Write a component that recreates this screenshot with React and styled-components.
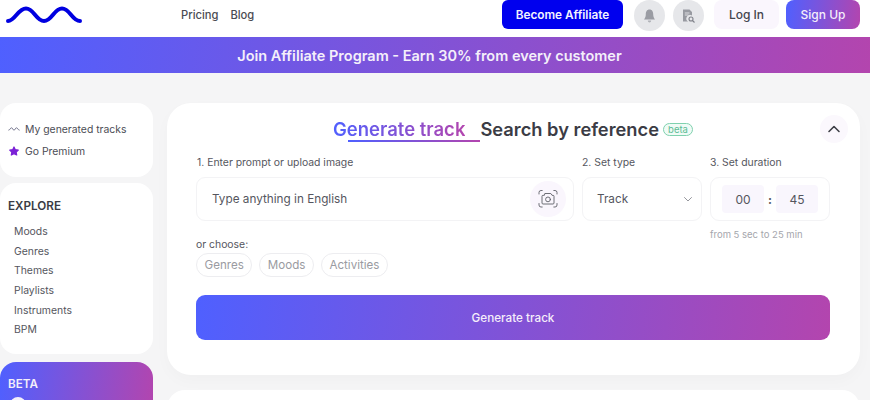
import React from 'react';
import styled, { createGlobalStyle } from 'styled-components';

const GRADIENT = 'linear-gradient(96deg, #4f60ff 0%, #b345ae 100%)';

const GlobalStyle = createGlobalStyle`
  html, body { margin: 0; padding: 0; background: #f5f5f6; }
  body { font-family: Inter, "Noto Sans", sans-serif; color: #3a3b44; }
  * { box-sizing: border-box; }
`;

const Page = styled.div`
  width: 870px;
  height: 400px;
  overflow: hidden;
`;

/* top bar */
const Header = styled.header`
  height: 37px;
  background: #fff;
  display: flex;
  align-items: flex-start;
  padding: 0 10px 0 6px;
`;

const Logo = styled.svg`
  width: 76px;
  height: 18px;
  margin-top: 6px;
  flex: none;
`;

const Nav = styled.nav`
  display: flex;
  gap: 12px;
  margin: 8px 0 0 99px;
  font-size: 11.2px;
  line-height: 14px;
  font-weight: 500;
  color: #4a4b52;
`;

const HeaderActions = styled.div`
  margin-left: auto;
  display: flex;
  align-items: flex-start;
`;

const AffiliateButton = styled.div`
  width: 121px;
  height: 29px;
  background: #0000ee;
  border-radius: 6px;
  color: #f3f3ff;
  font-size: 11.8px;
  font-weight: 600;
  display: flex;
  align-items: center;
  justify-content: center;
  margin-right: 11px;
`;

const RoundIcon = styled.div`
  width: 31px;
  height: 31px;
  border-radius: 50%;
  background: #e6e7ea;
  display: flex;
  align-items: center;
  justify-content: center;
  margin-right: ${(props) => props.$gap}px;
`;

const AuthButton = styled.div`
  width: ${(props) => props.$w}px;
  height: 29px;
  border-radius: 8px;
  background: ${(props) => (props.$primary ? GRADIENT : '#faf6fd')};
  color: ${(props) => (props.$primary ? '#f5eefa' : '#44454d')};
  font-size: 12px;
  font-weight: 500;
  display: flex;
  align-items: center;
  justify-content: center;
  margin-left: ${(props) => props.$gap || 0}px;
`;

/* promo strip */
const Banner = styled.div`
  height: 36px;
  background: ${GRADIENT};
  color: #f4effa;
  font-size: 14.5px;
  font-weight: 600;
  display: flex;
  align-items: center;
  justify-content: center;
  padding-right: 11px;
`;

const Columns = styled.div`
  display: grid;
  grid-template-columns: 153px 693px;
  column-gap: 14px;
  padding-top: 30px;
`;

const Sidebar = styled.aside`
  display: flex;
  flex-direction: column;
  gap: 6px;
`;

const SideCard = styled.div`
  background: #fff;
  border-radius: 16px;
  padding: ${(props) => props.$padding};
  height: ${(props) => props.$height}px;
`;

const QuickLink = styled.div`
  display: flex;
  align-items: center;
  gap: 5px;
  height: 22px;
  font-size: 10.4px;
  color: #4c4d55;
`;

const QuickIcon = styled.svg`
  width: 12px;
  height: 12px;
  flex: none;
`;

const SideTitle = styled.div`
  font-size: 11.7px;
  font-weight: 600;
  color: #3a3b44;
  margin-bottom: 9px;
`;

const SideItem = styled.div`
  height: 19.7px;
  margin-left: 6px;
  font-size: 10.4px;
  line-height: 19.7px;
  color: #55565e;
`;

const BetaCard = styled(SideCard)`
  background: ${GRADIENT};
  margin-top: 2px;
  color: #f4effa;
  font-size: 11.7px;
  font-weight: 600;
`;

const BetaDot = styled.div`
  width: 16px;
  height: 16px;
  margin: 6px 0 0 2px;
  border-radius: 50%;
  background: #f4effa;
`;

const Main = styled.main`
  display: flex;
  flex-direction: column;
  gap: 15px;
`;

const GenerateCard = styled.section`
  position: relative;
  height: 272px;
  background: #fff;
  border-radius: 24px;
  padding: 13px 30px 0 29px;
  box-shadow: 0 6px 16px rgba(40, 40, 60, 0.025);
`;

const NextCard = styled.section`
  height: 60px;
  background: #fff;
  border-radius: 18px;
`;

const TitleRow = styled.div`
  display: flex;
  align-items: center;
  justify-content: center;
  height: 25px;
`;

const ActiveTab = styled.div`
  position: relative;
  margin-right: 15px;

  &::after {
    content: '';
    position: absolute;
    left: 15px;
    right: -15px;
    bottom: -2px;
    height: 1.5px;
    background: ${GRADIENT};
  }
`;

const GradientText = styled.span`
  font-size: 18.5px;
  font-weight: 600;
  background: ${GRADIENT};
  -webkit-background-clip: text;
  background-clip: text;
  color: transparent;
`;

const Tab = styled.div`
  font-size: 18.3px;
  font-weight: 600;
  color: #3b3c45;
`;

const BetaBadge = styled.span`
  margin: 2px 0 0 4px;
  width: 30px;
  height: 13px;
  border: 1px solid #7fd1ae;
  border-radius: 7px;
  background: #f0fbf6;
  color: #5cbc95;
  font-size: 9.5px;
  line-height: 11px;
  text-align: center;
`;

const Collapse = styled.div`
  position: absolute;
  top: 12px;
  right: 12px;
  width: 28px;
  height: 28px;
  border-radius: 50%;
  background: #fbf8fd;
  display: flex;
  align-items: center;
  justify-content: center;
`;

const FieldGrid = styled.div`
  display: grid;
  grid-template-columns: 378px 120px 120px;
  column-gap: 8px;
  margin-top: 15px;
`;

const Field = styled.div`
  display: flex;
  flex-direction: column;
`;

const FieldLabel = styled.div`
  height: 14px;
  font-size: 10.4px;
  line-height: 14px;
  color: #55565e;
  margin-bottom: 7px;
  padding-left: ${(props) => props.$inset || 0}px;
`;

const InputBox = styled.div`
  height: 44px;
  border: 1px solid #f3f3f5;
  border-radius: 9px;
  display: flex;
  align-items: center;
  font-size: 11.75px;
  color: #55565e;
  padding: ${(props) => props.$padding};
  justify-content: ${(props) => props.$justify || 'space-between'};
`;

const CameraButton = styled.div`
  width: 36px;
  height: 36px;
  border-radius: 50%;
  background: #faf6fd;
  display: flex;
  align-items: center;
  justify-content: center;
`;

const TimeCell = styled.div`
  width: 42px;
  height: 28px;
  border-radius: 4px;
  background: #f9f6fd;
  display: flex;
  align-items: center;
  justify-content: center;
  font-size: 12px;
  color: #55565e;
`;

const TimeColon = styled.div`
  width: 10px;
  margin: 0 1px;
  text-align: center;
  font-size: 12px;
  font-weight: 700;
  color: #55565e;
`;

const Hint = styled.div`
  margin-top: 8px;
  font-size: 9.5px;
  line-height: 12px;
  color: #a5a6ac;
`;

const ChooseLabel = styled.div`
  margin-top: -3px;
  height: 14px;
  font-size: 10.4px;
  line-height: 14px;
  color: #55565e;
`;

const Chips = styled.div`
  display: flex;
  gap: 7px;
  margin-top: 1px;
`;

const Chip = styled.div`
  height: 24px;
  padding: 0 7.5px;
  border: 1px solid #ededf0;
  border-radius: 12px;
  display: flex;
  align-items: center;
  font-size: 11.6px;
  color: #9a9ba1;
`;

const GenerateButton = styled.div`
  height: 45px;
  margin-top: 18px;
  padding-top: 1px;
  border-radius: 9px;
  background: ${GRADIENT};
  color: #f5eefa;
  font-size: 11.7px;
  font-weight: 500;
  display: flex;
  align-items: center;
  justify-content: center;
`;

const exploreItems = ['Moods', 'Genres', 'Themes', 'Playlists', 'Instruments', 'BPM'];
const chipItems = ['Genres', 'Moods', 'Activities'];

export default function App() {
  return (
    <Page>
      <GlobalStyle />
      <Header>
        <Logo viewBox="0 0 76 18">
          <path
            d="M2 15 C9 15 12 2.5 20 2.5 C28 2.5 30 15 38 15 C46 15 48 2.5 56 2.5 C64 2.5 66 15 74 15"
            fill="none"
            stroke="#0000e0"
            strokeWidth="4"
            strokeLinecap="round"
          />
        </Logo>
        <Nav>
          <span>Pricing</span>
          <span>Blog</span>
        </Nav>
        <HeaderActions>
          <AffiliateButton>Become Affiliate</AffiliateButton>
          <RoundIcon $gap={8}>
            <svg width="13" height="14" viewBox="0 0 13 14">
              <path d="M6.5 0.5 C9.2 0.5 10.2 2.8 10.2 5.2 C10.2 7.8 11 9 12 10.4 L1 10.4 C2 9 2.8 7.8 2.8 5.2 C2.8 2.8 3.8 0.5 6.5 0.5 Z" fill="#9a9ca3" />
              <path d="M4.8 11.6 H8.2 C8 13 7.4 13.5 6.5 13.5 C5.6 13.5 5 13 4.8 11.6 Z" fill="#b0b2b8" />
            </svg>
          </RoundIcon>
          <RoundIcon $gap={10}>
            <svg width="13" height="14" viewBox="0 0 13 14">
              <path d="M1 0.5 H7.5 L10 3 V6.5 A3.6 3.6 0 0 0 6 12.5 H1 Z" fill="#989aa1" />
              <path d="M2.8 4 H7.5 M2.8 6 H6.5" stroke="#e6e7ea" strokeWidth="0.9" />
              <circle cx="9" cy="10" r="2" fill="none" stroke="#80828a" strokeWidth="1.1" />
              <path d="M10.5 11.5 L12.5 13.5" stroke="#80828a" strokeWidth="1.1" />
            </svg>
          </RoundIcon>
          <AuthButton $w={65}>Log In</AuthButton>
          <AuthButton $w={74} $primary $gap={7}>Sign Up</AuthButton>
        </HeaderActions>
      </Header>

      <Banner>Join Affiliate Program - Earn 30% from every customer</Banner>

      <Columns>
        <Sidebar>
          <SideCard $height={74} $padding="15px 0 0 8px">
            <QuickLink>
              <QuickIcon viewBox="0 0 12 12">
                <path d="M0.8 7.2 C2 7.2 2.3 4.8 3.5 4.8 C4.7 4.8 4.9 7.2 6 7.2 C7.1 7.2 7.3 4.8 8.5 4.8 C9.7 4.8 10 7.2 11.2 7.2" fill="none" stroke="#6a6b85" strokeWidth="0.9" strokeLinecap="round" />
              </QuickIcon>
              My generated tracks
            </QuickLink>
            <QuickLink>
              <QuickIcon viewBox="0 0 12 12">
                <path d="M6 2 L7.3 4.7 L10.3 5.1 L8.2 7.2 L8.7 10 L6 8.7 L3.3 10 L3.8 7.2 L1.7 5.1 L4.7 4.7 Z" fill="#7b22d6" stroke="#7b22d6" strokeWidth="1.2" strokeLinejoin="round" />
              </QuickIcon>
              Go Premium
            </QuickLink>
          </SideCard>

          <SideCard $height={171} $padding="16px 0 0 8px">
            <SideTitle>EXPLORE</SideTitle>
            {exploreItems.map((item) => (
              <SideItem key={item}>{item}</SideItem>
            ))}
          </SideCard>

          <BetaCard $height={60} $padding="15px 0 0 8px">
            BETA
            <BetaDot />
          </BetaCard>
        </Sidebar>

        <Main>
          <GenerateCard>
            <TitleRow>
              <ActiveTab>
                <GradientText>Generate track</GradientText>
              </ActiveTab>
              <Tab>Search by reference</Tab>
              <BetaBadge>beta</BetaBadge>
            </TitleRow>
            <Collapse>
              <svg width="14" height="14" viewBox="0 0 14 14">
                <path d="M2 9.5 L7 4.5 L12 9.5" fill="none" stroke="#3f4048" strokeWidth="1.6" strokeLinecap="round" strokeLinejoin="round" />
              </svg>
            </Collapse>

            <FieldGrid>
              <Field>
                <FieldLabel $inset={1}>1. Enter prompt or upload image</FieldLabel>
                <InputBox $padding="0 7px 0 15px">
                  Type anything in English
                  <CameraButton>
                    <svg width="20" height="20" viewBox="0 0 20 20" fill="none" stroke="#5f6068" strokeWidth="0.9" strokeLinecap="round">
                      <path d="M1 5 V3.5 A2 2 0 0 1 3 1.5 H4.2 M15.8 1.5 H17 A2 2 0 0 1 19 3.5 V5 M1 14.5 V16 A2 2 0 0 0 3 18 H4.2 M15.8 18 H17 A2 2 0 0 0 19 16 V14.5" />
                      <path d="M7.2 4.5 H12.8 L14 6.3 H15 A1 1 0 0 1 16 7.3 V14 A1 1 0 0 1 15 15 H5 A1 1 0 0 1 4 14 V7.3 A1 1 0 0 1 5 6.3 H6 Z" strokeLinejoin="round" />
                      <circle cx="10" cy="10.4" r="2.4" />
                    </svg>
                  </CameraButton>
                </InputBox>
              </Field>
              <Field>
                <FieldLabel>2. Set type</FieldLabel>
                <InputBox $padding="0 8px 0 14px">
                  Track
                  <svg width="10" height="10" viewBox="0 0 10 10">
                    <path d="M1.5 3.5 L5 7 L8.5 3.5" fill="none" stroke="#8a8b92" strokeWidth="0.9" strokeLinecap="round" />
                  </svg>
                </InputBox>
              </Field>
              <Field>
                <FieldLabel>3. Set duration</FieldLabel>
                <InputBox $padding="0" $justify="center">
                  <TimeCell>00</TimeCell>
                  <TimeColon>:</TimeColon>
                  <TimeCell>45</TimeCell>
                </InputBox>
                <Hint>from 5 sec to 25 min</Hint>
              </Field>
            </FieldGrid>

            <ChooseLabel>or choose:</ChooseLabel>
            <Chips>
              {chipItems.map((chip) => (
                <Chip key={chip}>{chip}</Chip>
              ))}
            </Chips>

            <GenerateButton>Generate track</GenerateButton>
          </GenerateCard>
          <NextCard />
        </Main>
      </Columns>
    </Page>
  );
}
